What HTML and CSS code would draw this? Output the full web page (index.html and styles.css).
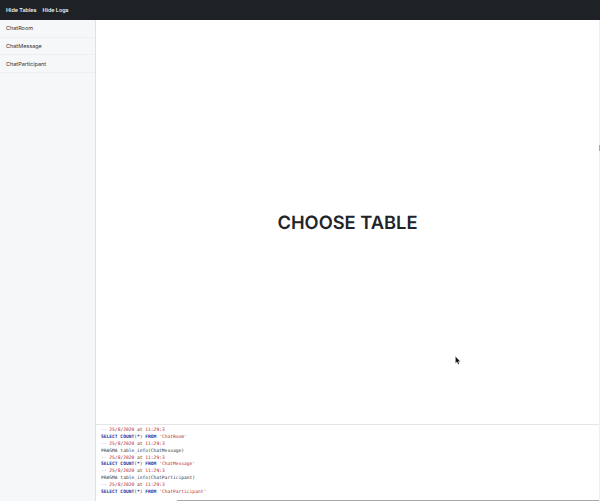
FILE: index.html
```html
<!DOCTYPE html>
<html lang="en">
<head>
<meta charset="utf-8">
<title>Tables</title>
<link rel="stylesheet" href="styles.css">
</head>
<body>
<nav class="topbar">
  <a class="toplink">Hide Tables</a>
  <a class="toplink">Hide Logs</a>
</nav>
<div class="main">
  <aside class="sidebar">
    <div class="table-item">ChatRoom</div>
    <div class="table-item">ChatMessage</div>
    <div class="table-item">ChatParticipant</div>
  </aside>
  <section class="content">
    <div class="stage">
      <h1 class="choose">CHOOSE TABLE</h1>
      <svg class="cursor" width="6" height="9" viewBox="0 0 6 9"><path d="M0.5 0.5V7L2 5.8L3 8.2L4.2 7.7L3.2 5.4H5.2Z" fill="#111" stroke="#bbb" stroke-width="0.4"/></svg>
      <div class="v-thumb"></div>
    </div>
    <div class="logs">
      <div class="log">PRAGMA table_info(ChatRoom)</div>
      <div class="log"><span class="d">--</span> <span class="s">25/8/2020</span> at <span class="s">11:29:3</span></div>
      <div class="log"><b class="k">SELECT COUNT</b>(<b class="k">*</b>) <b class="k">FROM</b> <span class="s">'ChatRoom'</span></div>
      <div class="log"><span class="d">--</span> <span class="s">25/8/2020</span> at <span class="s">11:29:3</span></div>
      <div class="log">PRAGMA table_info(ChatMessage)</div>
      <div class="log"><span class="d">--</span> <span class="s">25/8/2020</span> at <span class="s">11:29:3</span></div>
      <div class="log"><b class="k">SELECT COUNT</b>(<b class="k">*</b>) <b class="k">FROM</b> <span class="s">'ChatMessage'</span></div>
      <div class="log"><span class="d">--</span> <span class="s">25/8/2020</span> at <span class="s">11:29:3</span></div>
      <div class="log">PRAGMA table_info(ChatParticipant)</div>
      <div class="log"><span class="d">--</span> <span class="s">25/8/2020</span> at <span class="s">11:29:3</span></div>
      <div class="log"><b class="k">SELECT COUNT</b>(<b class="k">*</b>) <b class="k">FROM</b> <span class="s">'ChatParticipant'</span></div>
      <div class="h-thumb"></div>
    </div>
  </section>
</div>
</body>
</html>
```
FILE: styles.css
```css
* { box-sizing: border-box; }
html, body { height: 100%; }
body {
  margin: 0;
  display: flex;
  flex-direction: column;
  height: 501px;
  overflow: hidden;
  background: #fff;
  font-family: Inter, "Liberation Sans", sans-serif;
  text-rendering: geometricPrecision;
  color: #212529;
}
.topbar {
  flex: 0 0 20px;
  background: #1e2226;
  display: flex;
  align-items: center;
  gap: 6px;
  padding: 1px 6px 0;
}
.toplink {
  color: #f0f0f0;
  font-size: 5.4px;
  font-weight: 600;
}
.main { flex: 1; display: flex; min-height: 0; }
.sidebar {
  flex: 0 0 96px;
  background: #f6f7f9;
  border-right: 1px solid #dee2e6;
}
.table-item {
  height: 17.7px;
  padding: 2px 0 0 6px;
  display: flex;
  align-items: center;
  font-size: 5.5px;
  color: #333;
  border-bottom: 1px solid #eeeff1;
}
.content {
  flex: 1;
  display: flex;
  flex-direction: column;
  min-width: 0;
  position: relative;
  border-right: 1px solid #efefef;
}
.stage {
  flex: 1;
  position: relative;
  display: flex;
  align-items: center;
  justify-content: center;
}
.choose {
  margin: 0;
  font-size: 18.3px;
  font-weight: 600;
  color: #212529;
  position: relative;
  top: 1px;
}
.cursor { position: absolute; left: 359px; top: 336px; }
.v-thumb {
  position: absolute;
  right: -1px;
  top: 125px;
  width: 1px;
  height: 6px;
  background: #a8a8a8;
}
.logs {
  flex: 0 0 77px;
  position: relative;
  overflow: hidden;
  display: flex;
  flex-direction: column;
  justify-content: flex-end;
  border-top: 1px solid #e6e6e6;
  padding: 0 5px 4px;
  font-family: "DejaVu Sans Mono", monospace;
  font-size: 4.6px;
  line-height: 6.9px;
  color: #333;
}
.log { white-space: pre; flex: none; }
.d { color: #6b7fb0; }
.k { font-weight: 700; color: #1c2f9c; }
.s { color: #b02a2a; }
.h-thumb {
  position: absolute;
  left: 81px;
  right: 0;
  bottom: 0;
  height: 1px;
  background: #a8a8a8;
}
```
